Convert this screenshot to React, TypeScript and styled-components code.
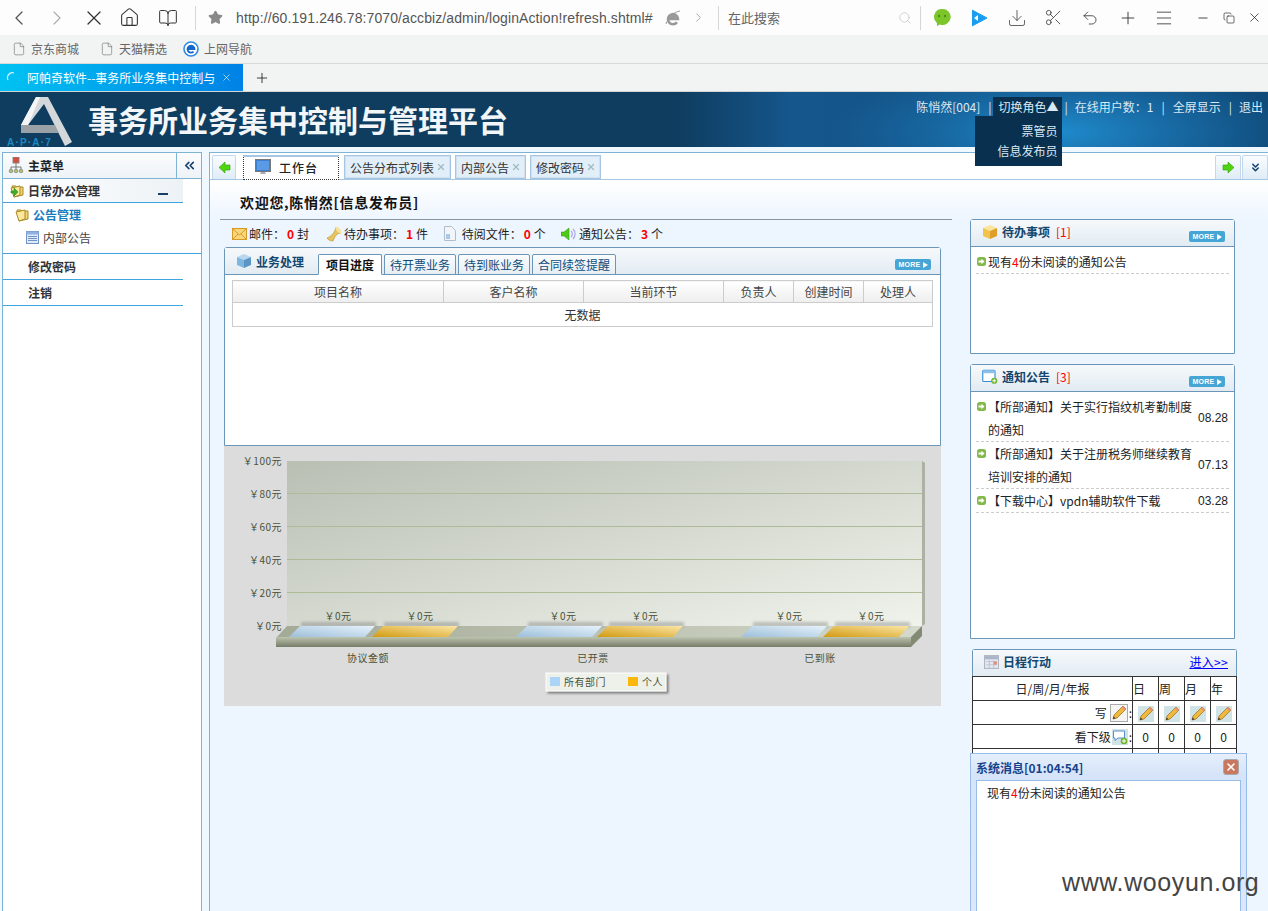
import React from "react";
import styled, { createGlobalStyle } from "styled-components";
import { ChevronLeft, ChevronRight, X, Home, BookOpen, Star, Search, Download, Scissors, Undo2, Plus, Menu, Minus, Copy, File, ChevronsLeft, ChevronsDown } from "lucide-react";

const Global = createGlobalStyle`
  html, body { margin: 0; padding: 0; background: #fff; }
  body { font-family: "Noto Sans CJK SC", "Liberation Sans", sans-serif; font-size: 12px; color: #222; }
  * { box-sizing: border-box; }
`;

const Page = styled.div`position: relative; width: 1268px; height: 911px; overflow: hidden; background: #f0f8ff;`;

/* ---------- browser chrome ---------- */
const Toolbar = styled.div`display: flex; align-items: center; height: 35px; background: #fdfdfd;`;
const Slot = styled.div<{ $w: number; $ml?: number }>`width: ${p => p.$w}px; margin-left: ${p => p.$ml || 0}px; flex: none; display: flex; align-items: center; justify-content: center; color: #555;`;
const Divider = styled.div<{ $ml: number; $mr: number }>`width: 1px; height: 24px; background: #d6d6d6; margin: 0 ${p => p.$mr}px 0 ${p => p.$ml}px; flex: none;`;
const Url = styled.div`width: 427px; flex: none; overflow: hidden; white-space: nowrap; font: 14px "Liberation Sans", sans-serif; letter-spacing: .1px; color: #555; margin-left: 8px;`;
const SearchText = styled.div`width: 167px; flex: none; font-size: 13px; color: #666; line-height: 20px;`;
const Bookmarks = styled.div`display: flex; align-items: center; height: 29px; padding-left: 12px; background: #f2f4f4; border-bottom: 1px solid #d8dada;`;
const Bookmark = styled.div<{ $w: number }>`display: flex; align-items: center; gap: 5px; width: ${p => p.$w}px; color: #666; line-height: 18px;`;
const TabStrip = styled.div`display: flex; align-items: center; height: 28px; background: #f2f4f4; border-bottom: 1px solid #d4d6d6;`;
const ActiveBrowserTab = styled.div`width: 243px; height: 27px; display: flex; align-items: center; padding-left: 6px; gap: 12px; color: #fff; background: linear-gradient(90deg, #00c2f2, #0082e6); white-space: nowrap;`;
const TabTitle = styled.span`width: 188px; line-height: 18px;`;
const TabClose = styled(X)`margin-left: -6px;`;
const NewTab = styled.div`margin-left: 11px; color: #222; display: flex;`;

/* ---------- app header ---------- */
const Header = styled.header`display: flex; justify-content: space-between; height: 55px;
  background: radial-gradient(ellipse 230px 70px at 1060px 40px, #1f8acb 0%, #17669f 55%, rgba(15,61,96,0) 100%), linear-gradient(90deg, #0f3d60 0, #0f3d60 680px, #15568c 790px, #0f4a78 1268px);`;
const Brand = styled.div`display: flex; align-items: center;`;
const Title = styled.h1`margin: 0; font-size: 30px; line-height: 55px; font-weight: 700; color: #f2f6f8; letter-spacing: 0; white-space: nowrap;`;
const UserBar = styled.div`display: flex; align-items: flex-start; padding: 5px 5px 0 0; color: #d9e9f4; line-height: 19px;`;
const Sep = styled.span<{ $l: number; $r: number }>`margin: 0 ${p => p.$r}px 0 ${p => p.$l}px; color: #d9e9f4;`;
const RoleToggle = styled.div`position: relative; width: 69px; height: 19px; margin-left: 1px; background: #0a3050; padding-left: 6px; white-space: nowrap;`;
const RoleMenu = styled.div`position: absolute; right: 0; top: 19px; width: 87px; height: 50px; background: #0a3050; text-align: right; padding-right: 4px; line-height: 20px; padding-top: 5px;`;

/* ---------- layout ---------- */
const Shell = styled.div`display: flex; padding: 5px 0 0 2px; height: 764px;`;
const Sidebar = styled.aside`width: 200px; flex: none; border: 1px solid #7fb3d3; border-bottom: 0; background: #fff;`;
const SideHead = styled.div`display: flex; height: 26px; border-bottom: 1px solid #7fb3d3; background: linear-gradient(#fbfcfd, #eef3f8);`;
const SideHeadTitle = styled.div`flex: 1; display: flex; align-items: center; gap: 4px; padding-left: 5px; padding-bottom: 1px; font-weight: 700; color: #222;`;
const Collapse = styled.div`width: 25px; border-left: 1px solid #7fb3d3; display: flex; align-items: center; justify-content: center; color: #15406b;`;
const GroupRow = styled.div`display: flex; align-items: center; width: 180px; height: 24px; border-bottom: 1px solid #3fa5dc; padding-left: 7px; gap: 3px; font-weight: 700; color: #333; background: linear-gradient(90deg, #fff, #edf2f6);`;
const GroupDash = styled.span`width: 10px; height: 2px; background: #1a3f66; margin: 7px 15px 0 auto;`;
const GroupBody = styled.div`height: 51px; border-bottom: 1px solid #3fa5dc; position: relative;`;
const SubGroup = styled.div`display: flex; align-items: center; gap: 3px; height: 23px; padding-left: 12px; font-weight: 700; color: #1b7fbf;`;
const SubItem = styled.div`display: flex; align-items: center; gap: 4px; height: 23px; padding-left: 23px; color: #444;`;
const SideLink = styled.div`width: 180px; height: 26px; line-height: 25px; padding-left: 25px; font-weight: 700; color: #333; border-bottom: 1px solid #3fa5dc;`;

const Main = styled.main`margin-left: 7px; flex: 1; border-left: 1px solid #7fb3d3; border-top: 1px solid #7fb3d3; background: #fff; display: flex; flex-direction: column; min-width: 0;`;
const Tabs = styled.div`display: flex; align-items: flex-end; height: 27px; padding-left: 2px; border-bottom: 1px solid #a6c6e4; background: #fff; flex: none;`;
const NavTab = styled.div`width: 24px; height: 24px; margin-right: 7px; border: 1px solid #c2d8ea; border-bottom: 0; border-radius: 2px 2px 0 0; background: linear-gradient(#fafcfe, #dfecf6); display: flex; align-items: center; justify-content: center;`;
const HomeTab = styled.div`width: 96px; height: 25px; margin-right: 5px; margin-bottom: -1px; border: 1px dotted #333; border-top: 2px solid #a6c6e4; background: #fff; display: flex; align-items: center; padding-left: 11px; padding-bottom: 2px; gap: 8px; color: #222; font-weight: 500; letter-spacing: 1px;`;
const CloseTab = styled.div`height: 24px; margin-right: 4px; padding: 0 4px 0 5px; border: 1px solid #a6c6e4; outline: 1px solid #cfe0f0; outline-offset: -2px; background: #e2eef8; display: flex; align-items: center; gap: 2px; color: #333; white-space: nowrap;`;
const CloseMark = styled(X)`color: #9dbcc6;`;
const RightTabs = styled.div`margin-left: auto; display: flex; gap: 1px;`;
const SquareTab = styled(NavTab)`margin-right: 0; width: 26px;`;

const Content = styled.div`flex: 1; display: flex; padding-left: 10px; min-height: 0; background: linear-gradient(#fff 0, #edf5fe 40px);`;
const LeftCol = styled.div`width: 732px; flex: none;`;
const Welcome = styled.div`height: 40px; padding: 12px 0 0 20px; line-height: 20px; font-size: 14px; font-weight: 700; letter-spacing: .7px; color: #111; border-bottom: 1px solid #8b959e;`;
const Stats = styled.div`display: flex; align-items: center; height: 27px; padding-left: 12px;`;
const Stat = styled.div<{ $w: number }>`display: flex; align-items: center; width: ${p => p.$w}px; gap: 2px; white-space: nowrap; color: #222;`;
const Num = styled.b`color: #f00; margin: 0 1px 0 0;`;
const Panel = styled.section`margin-left: 4px; width: 717px; height: 199px; border: 1px solid #6b96b8; border-radius: 3px 3px 0 0; background: #fff;`;
const PanelHead = styled.div`display: flex; align-items: flex-end; height: 27px; border-bottom: 1px solid #6b96b8; background: linear-gradient(#f6f9fb, #e2ebf3); padding-left: 11px;`;
const PanelTitle = styled.div`display: flex; align-items: center; gap: 4px; width: 82px; height: 26px; font-weight: 700; color: #13466e;`;
const InnerTab = styled.div<{ $active?: boolean; $w: number }>`width: ${p => p.$w}px; height: 21px; margin-right: 2px; margin-bottom: -1px; text-align: center; line-height: 20px; border: 1px solid #6b96b8; border-radius: 2px 2px 0 0;
  ${p => p.$active ? "border-bottom-color:#fff; background:#fff; color:#111; font-weight:700;" : "background:linear-gradient(#fafcfd,#e6eef5); color:#0f4c7a;"}`;
const More = styled.div`display: flex; align-items: center; justify-content: center; gap: 2px; width: 36px; height: 11px; background: #45a5d5; border-radius: 2px; color: #fff; font: 700 7px/11px "Liberation Sans", sans-serif; letter-spacing: .3px;`;
const MoreWrap = styled.div<{ $b: number; $r: number }>`margin: 0 ${p => p.$r}px ${p => p.$b}px auto;`;
const Grid = styled.table`margin: 5px 0 0 7px; width: 700px; border-collapse: collapse; table-layout: fixed;`;
const Th = styled.th<{ $w: number }>`width: ${p => p.$w}px; height: 22px; padding: 0; border: 1px solid #ccc; font-weight: 400; color: #444; background: linear-gradient(#fff, #eee);`;
const Td = styled.td`height: 24px; padding: 0; border: 1px solid #ccc; text-align: center; color: #333;`;
const ChartBox = styled.div`margin-left: 4px; width: 717px; height: 260px; background: #dcdcdc; svg { display: block; }`;

const RightCol = styled.div`margin-left: 18px; width: 267px; flex: none; padding-top: 39px;`;
const Box = styled.section<{ $h: number }>`width: 265px; height: ${p => p.$h}px; border: 1px solid #6b96b8; border-radius: 3px 3px 0 0; background: #fff; margin-bottom: 10px;`;
const BoxHead = styled.div`display: flex; align-items: center; height: 27px; border-bottom: 1px solid #6b96b8; padding: 0 9px 3px 11px; gap: 4px; background: linear-gradient(#f6f9fb, #e2ebf3); font-weight: 700; color: #13466e;`;
const Count = styled.span`color: #f00; font-weight: 400; margin-left: 2px;`;
const List = styled.ul`list-style: none; margin: 0; padding: 3px 5px 0; `;
const Item = styled.li`display: flex; align-items: center; border-bottom: 1px dashed #ccc; line-height: 23px; color: #222;`;
const Bullet = styled.span`flex: none; width: 12px; height: 23px; align-self: flex-start; display: flex; align-items: center; padding-left: 1px;`;
const ItemText = styled.span`flex: 1; min-width: 0;`;
const ItemDate = styled.span`flex: none; width: 32px; font: 12px "Liberation Sans", sans-serif; text-align: right; padding-right: 1px;`;
const Red = styled.span`color: #f00;`;
const ScheduleBox = styled(Box)`margin-left: 2px; border-bottom: 0; height: 130px;`;
const Link = styled.a`margin-left: auto; margin-right: -1px; color: #00f; text-decoration: underline; font-weight: 400; letter-spacing: .3px;`;
const Sched = styled.table`width: 264px; margin: -1px 0 0 -1px; border-collapse: collapse; table-layout: fixed; background: #fff;`;
const SchedCell = styled.td<{ $w?: number; $align?: string }>`${p => p.$w ? `width:${p.$w}px;` : ""} height: 24px; padding: 0; border: 1px solid #333; text-align: ${p => p.$align || "center"}; color: #222; white-space: nowrap;`;
const SchedRight = styled.div`display: flex; align-items: center; justify-content: flex-end; gap: 1px;`;
const PencilWrap = styled.span`display: inline-flex; vertical-align: middle; background: #d0e4e8;`;
const PencilFrame = styled.span`display: inline-flex; border: 1px solid #aaa; background: #f4f4f0; margin-left: 2px;`;

/* ---------- overlays ---------- */
const Popup = styled.div`position: absolute; left: 970px; top: 753px; width: 277px; height: 160px; border: 1px solid #99bbe8; background: linear-gradient(#e6effb, #d6e4f9 20px, #dbe8fb); padding: 0 5px;`;
const PopupHead = styled.div`display: flex; align-items: center; justify-content: space-between; height: 26px; font-weight: 700; color: #15428b; padding-right: 2px;`;
const PopupClose = styled.div`width: 16px; height: 16px; border-radius: 3px; background: #c9775f; border: 1px solid #a9a9a9; color: #fff; display: flex; align-items: center; justify-content: center;`;
const PopupBody = styled.div`height: 140px; border: 1px solid #99bbe8; background: #fff; padding: 3px 10px; line-height: 18px; color: #222;`;
const Watermark = styled.div`position: absolute; left: 1062px; top: 867px; font: 25px/30px "Liberation Sans", sans-serif; letter-spacing: .6px; color: #444;`;

/* ---------- drawn icons ---------- */
const Wechat = () => (
  <svg width="18" height="19" viewBox="0 0 18 19"><path d="M9 1a8 8 0 0 0-5 14.2L4 18l3-1.5A8 8 0 1 0 9 1z" fill="#7cc52b" /><circle cx="6" cy="8" r="1.2" fill="#4a8f10" /><circle cx="12" cy="8" r="1.2" fill="#4a8f10" /></svg>
);
const PlayBlue = () => (
  <svg width="16" height="18" viewBox="0 0 16 18"><path d="M0 1l15 8-15 8z" fill="#1a9df0" stroke="#1a9df0" strokeLinejoin="round" /><path d="M2 9l4-3v6z" fill="#fff" /></svg>
);
const IeGlyph = ({ c = "#999", s = 16 }: { c?: string; s?: number }) => (
  <svg width={s} height={s} viewBox="0 0 16 16"><path d="M3 9h10a5 5 0 1 0-1 3.2M3.5 6.5h8" fill="none" stroke={c} strokeWidth="2.6" /><path d="M1 14c2-7 8-12 14-13" fill="none" stroke={c} strokeWidth="1" /></svg>
);
const IeBlue = () => (
  <svg width="16" height="18" viewBox="0 0 16 18"><circle cx="8" cy="9" r="7" fill="#fff" stroke="#2f8be0" strokeWidth="1.6" /><path d="M4.5 9h7a3.5 3.5 0 1 0-1 2.6M5 7h5.5" fill="none" stroke="#1467c8" strokeWidth="1.8" /></svg>
);
const Spinner = () => (
  <svg width="9" height="11" viewBox="0 0 9 11"><path d="M8 1a5 5 0 0 0-6 7" fill="none" stroke="#d6f3ff" strokeWidth="1.2" /></svg>
);
const Logo = () => (
  <svg width="88" height="55" viewBox="0 92 88 55">
    <polygon points="36,97 48,97 72,142 65,146 44,104 28,125 55,125 59,133 21,133 21,125" fill="#d5d8da" />
    <polygon points="21,125 36,97 40,97 28,125" fill="#f4f5f6" />
    <polygon points="21,133 59,133 55,125 21,125" fill="#9aa2a8" />
    <text x="7" y="146" fontFamily="Liberation Sans" fontSize="10" fontWeight="700" fill="#1a8ac0" letterSpacing="1.2">A·P·A·7</text>
  </svg>
);
const SiteMap = () => (
  <svg width="16" height="16" viewBox="0 0 16 16"><rect x="5" y="0" width="6" height="6" fill="#d84a3a" stroke="#888" /><path d="M8 6v4M3 12v-2h10v2M8 10v2" stroke="#777" fill="none" /><circle cx="3" cy="14" r="1.8" fill="#b6c86a" stroke="#666" strokeWidth=".6" /><circle cx="8" cy="14" r="1.8" fill="#b6c86a" stroke="#666" strokeWidth=".6" /><circle cx="13" cy="14" r="1.8" fill="#b6c86a" stroke="#666" strokeWidth=".6" /></svg>
);
const FolderIcon = ({ arrow }: { arrow?: boolean }) => (
  <svg width="15" height="15" viewBox="0 0 15 15"><path d="M2 3h4l1 1h6v8l-9 2z" fill="#f3d36f" stroke="#a88a28" /><path d="M1 5l9-2v9l-6 2z" fill="#fbe89a" stroke="#a88a28" />
    {arrow && <path d="M1 8h3V5l4 4-4 4v-3H1z" fill="#3fae2a" stroke="#1f7a18" strokeWidth=".5" />}</svg>
);
const DocList = () => (
  <svg width="13" height="13" viewBox="0 0 13 13"><rect x=".5" y=".5" width="12" height="12" fill="#dfe9fa" stroke="#6f92c9" /><rect x=".5" y=".5" width="12" height="3" fill="#8fb0e2" /><path d="M2 5.5h9M2 7.5h9M2 9.5h9" stroke="#6f92c9" /></svg>
);
const ArrowGreen = ({ dir }: { dir: "left" | "right" }) => (
  <svg width="13" height="13" viewBox="0 0 13 13"><path d={dir === "left" ? "M1 6.500 7 1v3h5v5H7v3z" : "M12 6.500 6 1v3H1v5h5v3z"} fill="#4fd410" stroke="#2f9a08" strokeWidth=".6" /></svg>
);
const Monitor = () => (
  <svg width="16" height="16" viewBox="0 0 16 16"><rect x=".5" y=".5" width="15" height="12" fill="#3f7fd0" stroke="#777" /><rect x="2" y="2" width="12" height="9" fill="#5b9be6" /><path d="M5 15h6l-1-2H6z" fill="#aaa" /></svg>
);
const Envelope = () => (
  <svg width="15" height="12" viewBox="0 0 15 12"><rect x=".5" y=".5" width="14" height="11" fill="#f8d679" stroke="#d59a28" /><path d="M1 1l6.500 6L14 1M1 11l5-5M14 11L9 6" fill="none" stroke="#d59a28" /></svg>
);
const Horn = () => (
  <svg width="16" height="16" viewBox="0 0 16 16"><path d="M1 12C6 10 9 6 10 1l5 6c-4 0-6 3-8 8-2 0-5-1-6-3z" fill="#e8c45c" stroke="#b8892a" strokeWidth=".6" /><ellipse cx="12.500" cy="4" rx="1.800" ry="3.800" transform="rotate(-40 12.500 4)" fill="#f7e39d" /></svg>
);
const Paper = () => (
  <svg width="13" height="15" viewBox="0 0 13 15"><path d="M.5.5h7l4 4v10H.5z" fill="#f1f5fa" stroke="#b4bcc8" /><path d="M2 8h4v5H2z" fill="#a9c8ea" /></svg>
);
const Speaker = () => (
  <svg width="16" height="14" viewBox="0 0 16 14"><path d="M0 5h3l5-4v12l-5-4H0z" fill="#4fc81a" stroke="#2f9a08" strokeWidth=".5" /><path d="M10 4a4 4 0 0 1 0 6M12 2a7 7 0 0 1 0 10" fill="none" stroke="#a9a5ea" strokeWidth="1.200" /></svg>
);
const Cube = ({ c = "#7fb6e0", l = "#b9d8ef", d = "#5a95c6", s = 16 }: { c?: string; l?: string; d?: string; s?: number }) => (
  <svg width={s} height={s} viewBox="0 0 16 16"><path d="M8 1l7 3-7 3-7-3z" fill={l} /><path d="M1 4l7 3v8l-7-3z" fill={c} /><path d="M15 4L8 7v8l7-3z" fill={d} /></svg>
);
const WindowAdd = () => (
  <svg width="16" height="16" viewBox="0 0 17 16"><rect x=".8" y=".8" width="13" height="12" fill="#fff" stroke="#3b8bd0" strokeWidth="1.200" rx="1" /><rect x="1" y="1" width="13" height="3" fill="#8cc0ea" /><circle cx="13" cy="12" r="3.300" fill="#6eb52f" /><path d="M11 12h4M13 10v4" stroke="#fff" /></svg>
);
const Calendar = () => (
  <svg width="15" height="14" viewBox="0 0 14 13"><rect x=".5" y=".5" width="13" height="12" fill="#e4e8f0" stroke="#b0b6c4" /><rect x="1" y="1" width="12" height="3" fill="#aab4c8" /><path d="M2 6h10M2 9h10M5 5v7M9 5v7" stroke="#c0c6d4" /><rect x="9" y="6" width="3" height="3" fill="#e0907a" /></svg>
);
const BulletArrow = () => (
  <svg width="9" height="9" viewBox="0 0 9 9"><rect width="9" height="9" rx="2.500" fill="#83b84a" /><path d="M1.500 3.500H4.500V1.800L7.500 4.500 4.500 7.200V5.500H1.500z" fill="#fff" /></svg>
);
const Pencil = ({ s = 16 }: { s?: number }) => (
  <svg width={s} height={s} viewBox="0 0 16 16"><path d="M12 1l3 3-9 9-4 1 1-4z" fill="#f0b83c" stroke="#9a6a1a" strokeWidth=".7" /><path d="M12 1l3 3-1.500 1.500-3-3z" fill="#e8917a" /><path d="M2 14l.700-2.500 1.800 1.800z" fill="#333" /></svg>
);
const Bubble = () => (
  <svg width="16" height="16" viewBox="0 0 16 16"><rect width="16" height="16" fill="#d0e4e8" /><path d="M1.500 2h11v7H6l-3 2.500V9H1.500z" fill="#fff" stroke="#5b8fc8" /><circle cx="12" cy="12" r="3.300" fill="#6eb52f" /><path d="M10 12h4M12 10v4" stroke="#fff" /></svg>
);
const MoreBadge = () => (<More>MORE<svg width="5" height="6" viewBox="0 0 5 6"><path d="M0 0l5 3-5 3z" fill="#fff" /></svg></More>);

const Ox = 224, Oy = 446;
const Para = ({ x, blue }: { x: number; blue?: boolean }) => (
  <g>
    <rect x={x + 12 - Ox} y={622 - Oy} width="75" height="5" fill="#777" opacity=".4" filter="url(#soft)" />
    <polygon points={`${x - Ox},${637 - Oy} ${x + 11 - Ox},${626 - Oy} ${x + 86 - Ox},${626 - Oy} ${x + 76 - Ox},${637 - Oy}`} fill={`url(#${blue ? "barBlue" : "barGold"})`} />
  </g>
);
const axis = [["￥100元", 461], ["￥80元", 494], ["￥60元", 527], ["￥40元", 560], ["￥20元", 593], ["￥0元", 626]] as const;
const groups = [{ b: 289, g: 372, l: 338, r: 420, c: 368, t: "协议金额" }, { b: 516, g: 597, l: 563, r: 645, c: 593, t: "已开票" }, { b: 741, g: 823, l: 789, r: 871, c: 820, t: "已到账" }];
const ChartTxt = styled.text`font-family: "Noto Sans CJK SC", sans-serif; font-size: 10px; letter-spacing: .5px; fill: #4a5238;`;

const Chart = () => (
  <svg width="717" height="260" viewBox="0 0 717 260">
    <defs>
      <linearGradient id="wall" x1="0" y1="0" x2="1" y2="1"><stop offset="0" stopColor="#b9bfb3" /><stop offset="1" stopColor="#f0f3ec" /></linearGradient>
      <linearGradient id="floor" x1="0" y1="0" x2="1" y2="0"><stop offset="0" stopColor="#a3aa95" /><stop offset="1" stopColor="#d3d9cb" /></linearGradient>
      <linearGradient id="slab" x1="0" y1="0" x2="0" y2="1"><stop offset="0" stopColor="#bcc4af" /><stop offset="1" stopColor="#757d68" /></linearGradient>
      <linearGradient id="barBlue" x1="0" y1="1" x2="1" y2="0"><stop offset="0" stopColor="#9dbfd9" /><stop offset="1" stopColor="#e6f2fb" /></linearGradient>
      <linearGradient id="barGold" x1="0" y1="1" x2="1" y2="0"><stop offset="0" stopColor="#d29a10" /><stop offset="1" stopColor="#fbe6a6" /></linearGradient>
      <filter id="soft" x="-10%" y="-100%" width="120%" height="300%"><feGaussianBlur stdDeviation="1.800" /></filter>
      <filter id="shadow" x="-10%" y="-20%" width="120%" height="150%"><feDropShadow dx="2" dy="2" stdDeviation="1" floodColor="#555" floodOpacity=".7" /></filter>
    </defs>
    <rect x={287 - Ox} y={461 - Oy} width={635} height={165} fill="url(#wall)" />
    <polygon points={`${922 - Ox},${461 - Oy} ${925 - Ox},${463 - Oy} ${925 - Ox},${624 - Oy} ${922 - Ox},${626 - Oy}`} fill="#adb1a3" />
    {[493, 526, 559, 592].map(y => <line key={y} x1={287 - Ox} x2={922 - Ox} y1={y - Oy + .5} y2={y - Oy + .5} stroke="#aebb98" />)}
    <polygon points={`${277 - Ox},${637 - Oy} ${287 - Ox},${626 - Oy} ${922 - Ox},${626 - Oy} ${911 - Ox},${637 - Oy}`} fill="url(#floor)" />
    <rect x={276 - Ox} y={637 - Oy} width="635" height="10" fill="url(#slab)" />
    <polygon points={`${911 - Ox},${637 - Oy} ${922 - Ox},${626 - Oy} ${922 - Ox},${636 - Oy} ${911 - Ox},${647 - Oy}`} fill="#828a74" />
    {groups.map(g => (
      <g key={g.t}>
        <Para x={g.b} blue />
        <Para x={g.g} />
        <ChartTxt x={g.l - Ox} y={620 - Oy} textAnchor="middle">￥0元</ChartTxt>
        <ChartTxt x={g.r - Ox} y={620 - Oy} textAnchor="middle">￥0元</ChartTxt>
        <ChartTxt x={g.c - Ox} y={662 - Oy} textAnchor="middle">{g.t}</ChartTxt>
      </g>
    ))}
    {axis.map(([t, y]) => <ChartTxt key={t} x={282 - Ox} y={y - Oy + 4} textAnchor="end">{t}</ChartTxt>)}
    <rect x={546 - Ox} y={673 - Oy} width="120" height="18" fill="#eef1e9" stroke="#fff" filter="url(#shadow)" />
    <rect x={550 - Ox} y={677 - Oy} width="10" height="9" fill="#acd4f6" />
    <ChartTxt x={564 - Ox} y={686 - Oy}>所有部门</ChartTxt>
    <rect x={628 - Ox} y={677 - Oy} width="10" height="9" fill="#fbb80c" />
    <ChartTxt x={642 - Ox} y={686 - Oy}>个人</ChartTxt>
  </svg>
);

export default function App() {
  return (
    <Page>
      <Global />
      <Toolbar>
        <Slot $w={38}><ChevronLeft size={24} strokeWidth={1.3} /></Slot>
        <Slot $w={38}><ChevronRight size={24} strokeWidth={1.1} color="#aaa" /></Slot>
        <Slot $w={35}><X size={24} strokeWidth={1.3} color="#333" /></Slot>
        <Slot $w={37}><Home size={21} strokeWidth={1.2} color="#333" /></Slot>
        <Slot $w={39}><BookOpen size={20} strokeWidth={1.2} color="#333" /></Slot>
        <Divider $ml={8} $mr={7} />
        <Slot $w={25}><Star size={15} fill="#8a8a8a" color="#8a8a8a" /></Slot>
        <Url>http://60.191.246.78:7070/accbiz/admin/loginAction!refresh.shtml#</Url>
        <Slot $w={20}><IeGlyph /></Slot>
        <Slot $w={30}><ChevronRight size={15} strokeWidth={1} color="#777" /></Slot>
        <Divider $ml={5} $mr={9} />
        <SearchText>在此搜索</SearchText>
        <Slot $w={20}><Search size={14} strokeWidth={1.1} color="#bbb" /></Slot>
        <Divider $ml={5} $mr={7} />
        <Slot $w={28}><Wechat /></Slot>
        <Slot $w={24} $ml={12}><PlayBlue /></Slot>
        <Slot $w={24} $ml={13}><Download size={20} strokeWidth={1} color="#444" /></Slot>
        <Slot $w={24} $ml={12}><Scissors size={19} strokeWidth={1} color="#333" /></Slot>
        <Slot $w={24} $ml={13}><Undo2 size={18} strokeWidth={1.1} color="#333" /></Slot>
        <Slot $w={24} $ml={14}><Plus size={20} strokeWidth={1.1} color="#333" /></Slot>
        <Slot $w={24} $ml={12}><Menu size={20} strokeWidth={1} color="#333" /></Slot>
        <Slot $w={24} $ml={15}><Minus size={14} strokeWidth={1.4} color="#222" /></Slot>
        <Slot $w={24} $ml={2}><Copy size={12} strokeWidth={1.3} color="#222" /></Slot>
        <Slot $w={24} $ml={1}><X size={15} strokeWidth={1.2} color="#222" /></Slot>
      </Toolbar>
      <Bookmarks>
        <Bookmark $w={88}><File size={14} strokeWidth={1} color="#666" />京东商城</Bookmark>
        <Bookmark $w={83}><File size={14} strokeWidth={1} color="#666" />天猫精选</Bookmark>
        <Bookmark $w={80}><IeBlue />上网导航</Bookmark>
      </Bookmarks>
      <TabStrip>
        <ActiveBrowserTab>
          <Spinner />
          <TabTitle>阿帕奇软件--事务所业务集中控制与</TabTitle>
          <TabClose size={11} strokeWidth={1.3} />
        </ActiveBrowserTab>
        <NewTab><Plus size={16} strokeWidth={1.3} /></NewTab>
      </TabStrip>
      <Header>
        <Brand><Logo /><Title>事务所业务集中控制与管理平台</Title></Brand>
        <UserBar>
          <span>陈悄然[004]</span>
          <Sep $l={8} $r={0}>|</Sep>
          <RoleToggle>切换角色▲
            <RoleMenu><div>票管员</div><div>信息发布员</div></RoleMenu>
          </RoleToggle>
          <Sep $l={3} $r={7}>|</Sep>
          <span>在线用户数：1</span>
          <Sep $l={8} $r={8}>|</Sep>
          <span>全屏显示</span>
          <Sep $l={8} $r={7}>|</Sep>
          <span>退出</span>
        </UserBar>
      </Header>
      <Shell>
        <Sidebar>
          <SideHead>
            <SideHeadTitle><SiteMap />主菜单</SideHeadTitle>
            <Collapse><ChevronsLeft size={15} strokeWidth={2.6} /></Collapse>
          </SideHead>
          <GroupRow><FolderIcon arrow />日常办公管理<GroupDash /></GroupRow>
          <GroupBody>
            <SubGroup><FolderIcon />公告管理</SubGroup>
            <SubItem><DocList />内部公告</SubItem>
          </GroupBody>
          <SideLink>修改密码</SideLink>
          <SideLink>注销</SideLink>
        </Sidebar>
        <Main>
          <Tabs>
            <NavTab><ArrowGreen dir="left" /></NavTab>
            <HomeTab><Monitor />工作台</HomeTab>
            <CloseTab>公告分布式列表<CloseMark size={10} strokeWidth={3} /></CloseTab>
            <CloseTab>内部公告<CloseMark size={10} strokeWidth={3} /></CloseTab>
            <CloseTab>修改密码<CloseMark size={10} strokeWidth={3} /></CloseTab>
            <RightTabs>
              <SquareTab><ArrowGreen dir="right" /></SquareTab>
              <SquareTab><ChevronsDown size={13} strokeWidth={2.8} color="#15406b" /></SquareTab>
            </RightTabs>
          </Tabs>
          <Content>
            <LeftCol>
              <Welcome>欢迎您,陈悄然[信息发布员]</Welcome>
              <Stats>
                <Stat $w={94}><Envelope />邮件：<Num>0</Num>封</Stat>
                <Stat $w={118}><Horn />待办事项：<Num>1</Num>件</Stat>
                <Stat $w={117}><Paper />&nbsp;待阅文件：<Num>0</Num>个</Stat>
                <Stat $w={130}><Speaker />通知公告：<Num>3</Num>个</Stat>
              </Stats>
              <Panel>
                <PanelHead>
                  <PanelTitle><Cube />业务处理</PanelTitle>
                  <InnerTab $active $w={64}>项目进度</InnerTab>
                  <InnerTab $w={72}>待开票业务</InnerTab>
                  <InnerTab $w={72}>待到账业务</InnerTab>
                  <InnerTab $w={84}>合同续签提醒</InnerTab>
                  <MoreWrap $b={4} $r={9}><MoreBadge /></MoreWrap>
                </PanelHead>
                <Grid>
                  <thead>
                    <tr>
                      <Th $w={211}>项目名称</Th><Th $w={140}>客户名称</Th><Th $w={140}>当前环节</Th>
                      <Th $w={70}>负责人</Th><Th $w={70}>创建时间</Th><Th $w={69}>处理人</Th>
                    </tr>
                  </thead>
                  <tbody><tr><Td colSpan={6}>无数据</Td></tr></tbody>
                </Grid>
              </Panel>
              <ChartBox><Chart /></ChartBox>
            </LeftCol>
            <RightCol>
              <Box $h={135}>
                <BoxHead><Cube c="#f3c24a" l="#fbe59a" d="#dd9f2a" />待办事项<Count>[1]</Count><MoreWrap $b={-10} $r={0}><MoreBadge /></MoreWrap></BoxHead>
                <List>
                  <Item><Bullet><BulletArrow /></Bullet><ItemText>现有<Red>4</Red>份未阅读的通知公告</ItemText></Item>
                </List>
              </Box>
              <Box $h={275}>
                <BoxHead><WindowAdd />通知公告<Count>[3]</Count><MoreWrap $b={-10} $r={0}><MoreBadge /></MoreWrap></BoxHead>
                <List>
                  <Item><Bullet><BulletArrow /></Bullet><ItemText>【所部通知】关于实行指纹机考勤制度的通知</ItemText><ItemDate>08.28</ItemDate></Item>
                  <Item><Bullet><BulletArrow /></Bullet><ItemText>【所部通知】关于注册税务师继续教育培训安排的通知</ItemText><ItemDate>07.13</ItemDate></Item>
                  <Item><Bullet><BulletArrow /></Bullet><ItemText>【下载中心】vpdn辅助软件下载</ItemText><ItemDate>03.28</ItemDate></Item>
                </List>
              </Box>
              <ScheduleBox $h={130}>
                <BoxHead><Calendar />日程行动<Link>进入&gt;&gt;</Link></BoxHead>
                <Sched>
                  <tbody>
                    <tr>
                      <SchedCell $w={160}>日/周/月/年报</SchedCell>
                      <SchedCell $w={26} $align="left">日</SchedCell><SchedCell $w={26} $align="left">周</SchedCell>
                      <SchedCell $w={26} $align="left">月</SchedCell><SchedCell $w={26} $align="left">年</SchedCell>
                    </tr>
                    <tr>
                      <SchedCell><SchedRight>写 <PencilFrame><Pencil /></PencilFrame>:</SchedRight></SchedCell>
                      {[0, 1, 2, 3].map(i => <SchedCell key={i}><PencilWrap><Pencil /></PencilWrap></SchedCell>)}
                    </tr>
                    <tr>
                      <SchedCell><SchedRight>看下级 <Bubble />:</SchedRight></SchedCell>
                      {[0, 1, 2, 3].map(i => <SchedCell key={i}>0</SchedCell>)}
                    </tr>
                    <tr>
                      <SchedCell><SchedRight><Bubble />:</SchedRight></SchedCell>
                      {[0, 1, 2, 3].map(i => <SchedCell key={i}>0</SchedCell>)}
                    </tr>
                  </tbody>
                </Sched>
              </ScheduleBox>
            </RightCol>
          </Content>
        </Main>
      </Shell>
      <Popup>
        <PopupHead>系统消息[01:04:54]<PopupClose><X size={12} strokeWidth={3.2} /></PopupClose></PopupHead>
        <PopupBody>现有<Red>4</Red>份未阅读的通知公告</PopupBody>
      </Popup>
      <Watermark>www.wooyun.org</Watermark>
    </Page>
  );
}
